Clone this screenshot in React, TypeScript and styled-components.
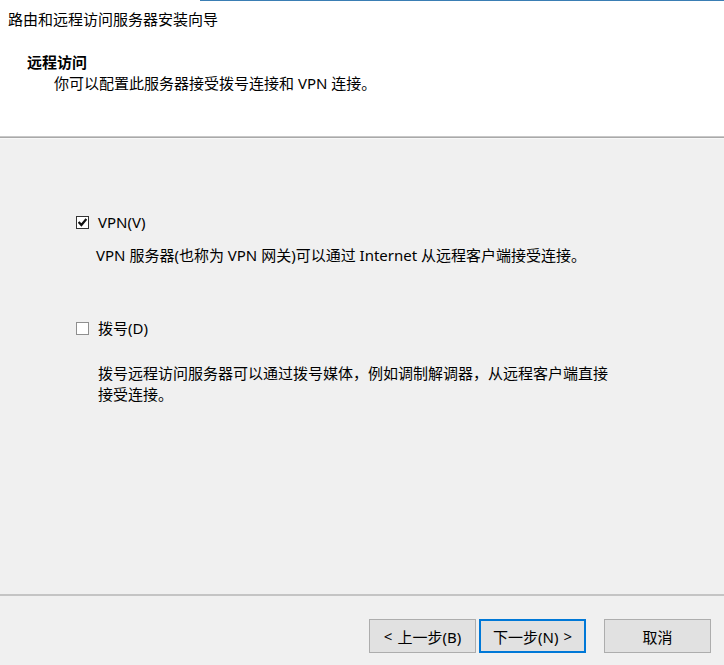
import React from "react";
import styled, { createGlobalStyle } from "styled-components";

const Global = createGlobalStyle`
  html, body { margin: 0; padding: 0; background: #f0f0f0; }
  body {
    font-family: "Noto Sans", "Noto Sans CJK SC", sans-serif;
    font-size: 15px;
    color: #000;
  }
  * { box-sizing: border-box; }
`;

const Window = styled.div`
  width: 724px;
  height: 665px;
  display: flex;
  flex-direction: column;
  background: #f0f0f0;
  overflow: hidden;
`;

const Header = styled.header`
  height: 136px;
  background: #fff;
  display: flex;
  flex-direction: column;
`;

const TopEdge = styled.div`
  height: 1px;
  margin-left: 200px;
  background: #3a7eb4;
`;

const WizardTitle = styled.div`
  margin: 8px 0 0 8px;
  line-height: 20px;
  white-space: nowrap;
`;

const PageTitle = styled.div`
  margin: 23px 0 0 27px;
  line-height: 20px;
  font-weight: 700;
`;

const PageSubtitle = styled.div`
  margin: 1px 0 0 54px;
  line-height: 20px;
  white-space: nowrap;
`;

const Separator = styled.div`
  height: 3px;
  border-top: 1px solid #c8c8c8;
  border-bottom: 1px solid #f8f8f8;
  background: #a9a9a9;
  background-clip: padding-box;
`;

const Body = styled.main`
  flex: 1;
  display: flex;
  flex-direction: column;
  padding: 73px 0 0 76px;
`;

const Option = styled.div<{ $gap: number }>`
  display: flex;
  flex-direction: column;
  margin-top: ${(p) => p.$gap}px;
`;

const CheckRow = styled.label`
  display: flex;
  align-items: center;
  gap: 9px;
  line-height: 20px;
  height: 20px;
`;

const Box = styled.span<{ $checked: boolean }>`
  width: 13px;
  height: 13px;
  display: inline-flex;
  align-items: center;
  justify-content: center;
  background: #fff;
  border: 1px solid ${(p) => (p.$checked ? "#333333" : "#8f8f8f")};
  flex: none;
`;

const Description = styled.p<{ $gap: number; $indent: number }>`
  margin: ${(p) => p.$gap}px 0 0 ${(p) => p.$indent}px;
  width: 520px;
  line-height: 21px;
`;

const Footer = styled.footer`
  height: 71px;
  border-top: 2px solid #c4c4c4;
  display: flex;
  justify-content: flex-end;
  align-items: flex-start;
  padding: 23px 13px 0 0;
`;

const ButtonGroup = styled.div`
  display: flex;
  gap: 3px;
  margin-right: 18px;
`;

const Button = styled.button<{ $default?: boolean }>`
  width: 107px;
  height: 34px;
  font-family: inherit;
  font-size: 15px;
  color: #000;
  background: #e1e1e1;
  border: ${(p) => (p.$default ? "2px solid #0078d7" : "1px solid #adadad")};
  padding: 0;
  display: flex;
  align-items: center;
  justify-content: center;
  gap: 5px;
`;

const Check = () => (
  <svg width="9" height="9" viewBox="0 0 9 9">
    <path d="M0.6 4.0 L3.4 7.0 L8.4 1.0" fill="none" stroke="#111" strokeWidth="2.3" />
  </svg>
);

const CheckBox: React.FC<{ checked: boolean; label: string }> = ({ checked, label }) => (
  <CheckRow>
    <Box $checked={checked}>{checked && <Check />}</Box>
    <span>{label}</span>
  </CheckRow>
);

export default function App() {
  return (
    <Window>
      <Global />
      <Header>
        <TopEdge />
        <WizardTitle>路由和远程访问服务器安装向导</WizardTitle>
        <PageTitle>远程访问</PageTitle>
        <PageSubtitle>你可以配置此服务器接受拨号连接和 VPN 连接。</PageSubtitle>
      </Header>
      <Separator />
      <Body>
        <Option $gap={0}>
          <CheckBox checked label="VPN(V)" />
          <Description $gap={13} $indent={20}>
            VPN 服务器(也称为 VPN 网关)可以通过 Internet 从远程客户端接受连接。
          </Description>
        </Option>
        <Option $gap={52}>
          <CheckBox checked={false} label="拨号(D)" />
          <Description $gap={25} $indent={22}>
            拨号远程访问服务器可以通过拨号媒体，例如调制解调器，从远程客户端直接接受连接。
          </Description>
        </Option>
      </Body>
      <Footer>
        <ButtonGroup>
          <Button>
            <span>&lt;</span>
            <span>上一步(B)</span>
          </Button>
          <Button $default>
            <span>下一步(N)</span>
            <span>&gt;</span>
          </Button>
        </ButtonGroup>
        <Button>取消</Button>
      </Footer>
    </Window>
  );
}
